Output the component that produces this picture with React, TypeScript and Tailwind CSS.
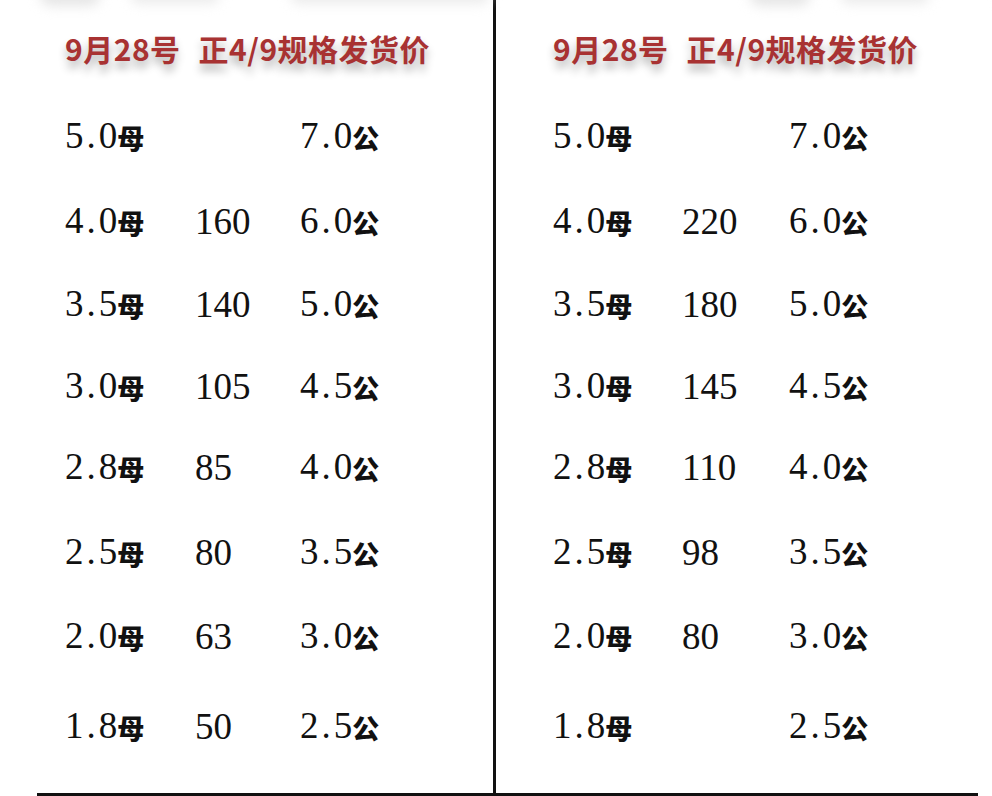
import React from 'react';

type Row = { mu: string; price: string; gong: string; h: string };

const LEFT: Row[] = [
    { mu: '5.0', price: '', gong: '7.0', h: 'h-[85px]' },
    { mu: '4.0', price: '160', gong: '6.0', h: 'h-[83px]' },
    { mu: '3.5', price: '140', gong: '5.0', h: 'h-[82px]' },
    { mu: '3.0', price: '105', gong: '4.5', h: 'h-[81px]' },
    { mu: '2.8', price: '85', gong: '4.0', h: 'h-[85px]' },
    { mu: '2.5', price: '80', gong: '3.5', h: 'h-[84px]' },
    { mu: '2.0', price: '63', gong: '3.0', h: 'h-[90px]' },
    { mu: '1.8', price: '50', gong: '2.5', h: 'h-[40px]' },
];

const RIGHT: Row[] = [
    { mu: '5.0', price: '', gong: '7.0', h: 'h-[85px]' },
    { mu: '4.0', price: '220', gong: '6.0', h: 'h-[83px]' },
    { mu: '3.5', price: '180', gong: '5.0', h: 'h-[82px]' },
    { mu: '3.0', price: '145', gong: '4.5', h: 'h-[81px]' },
    { mu: '2.8', price: '110', gong: '4.0', h: 'h-[85px]' },
    { mu: '2.5', price: '98', gong: '3.5', h: 'h-[84px]' },
    { mu: '2.0', price: '80', gong: '3.0', h: 'h-[90px]' },
    { mu: '1.8', price: '', gong: '2.5', h: 'h-[40px]' },
];

const serif = "font-['Liberation_Serif','DejaVu_Serif',serif]";
const cjk = "font-['Noto_Sans_CJK_SC','Noto_Sans_CJK_JP',sans-serif]";

function Title() {
    return (
        <div
            className={`${cjk} text-[30px] leading-[40px] font-bold tracking-[0.5px] text-[#a83232] [text-shadow:0_7px_8px_rgba(0,0,0,0.3)] whitespace-nowrap`}
        >
            9月28号<span className="inline-block w-[18px]" />正4/9规格发货价
        </div>
    );
}

// number with the wide full stop of the original type
function Num({ v }: { v: string }) {
    const [a, b] = v.split('.');
    return (
        <>
            {a}
            <span className="mx-[3px]">.</span>
            {b}
        </>
    );
}

function Unit({ ch }: { ch: string }) {
    return (
        <span className={`${cjk} text-[27px] font-black text-[#111] relative top-[1px]`}>
            {ch}
        </span>
    );
}

function Panel({ rows, pad, cols }: { rows: Row[]; pad: string; cols: string }) {
    return (
        <div className={`flex-1 flex flex-col ${pad} pt-[28px]`}>
            <Title />
            <div className="mt-[48px] flex flex-col">
                {rows.map((r) => (
                    <div key={r.mu} className={`${r.h} flex items-start`}>
                        <div className={`grid ${cols} h-[40px] items-center text-[37px] leading-[40px] text-[#111] ${serif}`}>
                            <span className="whitespace-nowrap">
                                <Num v={r.mu} />
                                <Unit ch="母" />
                            </span>
                            <span>{r.price}</span>
                            <span className="whitespace-nowrap">
                                <Num v={r.gong} />
                                <Unit ch="公" />
                            </span>
                        </div>
                    </div>
                ))}
            </div>
        </div>
    );
}

export default function App() {
    return (
        <div className="w-[992px] h-[796px] bg-white flex flex-col overflow-hidden">
            {/* leftover shadow smudges from the cropped rows above */}
            <div className="h-0 flex">
                <div className="flex gap-[30px] pl-[40px] -mt-[14px]">
                    <div className="w-[60px] h-[20px] rounded-full bg-[#e6e6e6] blur-[6px]" />
                    <div className="w-[90px] h-[18px] rounded-full bg-[#ececec] blur-[6px]" />
                    <div className="w-[200px] h-[18px] rounded-full bg-[#ececec] blur-[6px] ml-[40px]" />
                </div>
                <div className="flex gap-[30px] pl-[260px] -mt-[14px]">
                    <div className="w-[60px] h-[20px] rounded-full bg-[#e6e6e6] blur-[6px]" />
                    <div className="w-[90px] h-[18px] rounded-full bg-[#ececec] blur-[6px]" />
                    <div className="w-[200px] h-[18px] rounded-full bg-[#ececec] blur-[6px] ml-[40px]" />
                </div>
            </div>
            <div className="flex h-[793px]">
                <div className="w-[493px] flex">
                    <Panel rows={LEFT} pad="pl-[65px]" cols="grid-cols-[130px_105px_120px]" />
                </div>
                <div className="w-[3px] bg-[#111]" />
                <div className="flex-1 flex">
                    <Panel rows={RIGHT} pad="pl-[57px]" cols="grid-cols-[129px_107px_120px]" />
                </div>
            </div>
            <div className="flex">
                <div className="ml-[37px] w-[941px] h-[3px] bg-[#111]" />
            </div>
        </div>
    );
}
